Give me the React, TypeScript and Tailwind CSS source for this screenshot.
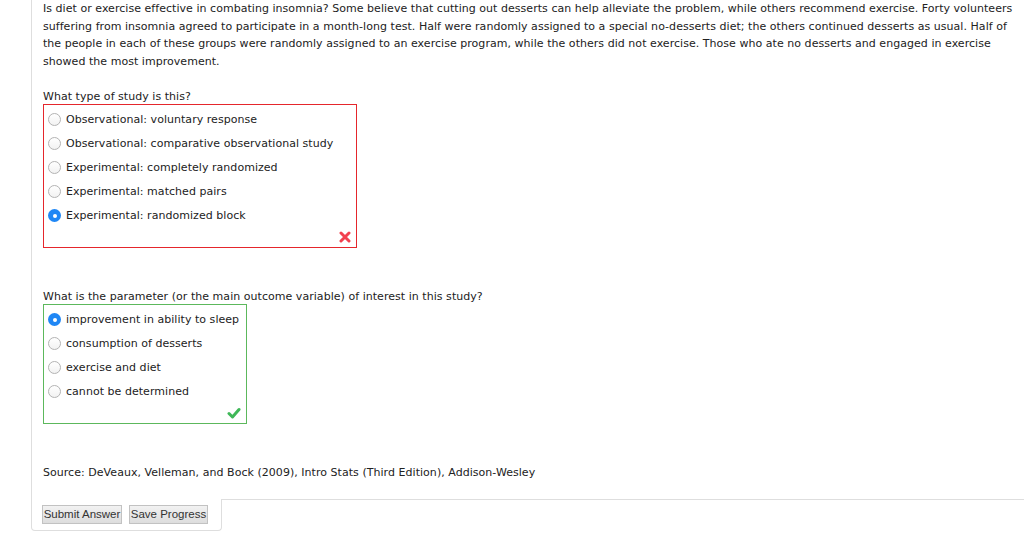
import type { ReactNode } from "react";

const font = { fontFamily: "'DejaVu Sans', Verdana, sans-serif" };
const btnFont = { fontFamily: "'Liberation Sans', Arial, sans-serif" };

function Radio({ checked }: { checked?: boolean }) {
  if (checked) {
    return (
      <span className="w-[13px] h-[13px] rounded-full bg-[#1f87f5] flex items-center justify-center shrink-0">
        <span className="w-[4px] h-[4px] rounded-full bg-white" />
      </span>
    );
  }
  return (
    <span className="w-[13px] h-[13px] rounded-full border border-[#b3b3b3] bg-gradient-to-b from-white to-[#f2f2f2] shrink-0" />
  );
}

function Option({ label, checked }: { label: string; checked?: boolean }) {
  return (
    <div className="flex items-center h-6 pl-[4px] gap-[5px]">
      <Radio checked={checked} />
      <span className="whitespace-nowrap">{label}</span>
    </div>
  );
}

function Cross() {
  return (
    <svg width="12" height="12" viewBox="0 0 12 12">
      <path d="M2 2 L10 10 M10 2 L2 10" stroke="#f2414f" strokeWidth="3" strokeLinecap="round" />
    </svg>
  );
}

function Check() {
  return (
    <svg width="14" height="12" viewBox="0 0 14 12">
      <path d="M2 6.5 L5.5 10 L12 2.5" stroke="#3fb858" strokeWidth="3" fill="none" strokeLinecap="round" strokeLinejoin="round" />
    </svg>
  );
}

function AnswerBox({ className, icon, children }: { className: string; icon: ReactNode; children: ReactNode }) {
  return (
    <div className={`border pt-[3px] ${className}`}>
      {children}
      <div className="h-[19px] flex items-center justify-end pr-[5px]">{icon}</div>
    </div>
  );
}

function Btn({ w, children }: { w: string; children: ReactNode }) {
  return (
    <button
      className={`h-[19px] ${w} p-0 whitespace-nowrap border border-[#c2c2c2] bg-gradient-to-b from-[#f2f2f2] to-[#dddddd] text-[#333] text-[11.5px] leading-[17px] tracking-normal`}
      style={btnFont}
    >
      {children}
    </button>
  );
}

export default function App() {
  return (
    <div className="h-[555px] bg-white text-[#222] text-[11px] tracking-[0.04px] overflow-hidden" style={font}>
      <div className="ml-[31px] border-l border-[#dedede] pl-[11px] pr-[6px] pb-[17px]">
        <p className="leading-[17.7px]">
          Is diet or exercise effective in combating insomnia? Some believe that cutting out desserts can help alleviate the problem, while others recommend exercise. Forty volunteers suffering from insomnia agreed to participate in a month-long test. Half were randomly assigned to a special no-desserts diet; the others continued desserts as usual. Half of the people in each of these groups were randomly assigned to an exercise program, while the others did not exercise. Those who ate no desserts and engaged in exercise showed the most improvement.
        </p>

        <div className="mt-[18px] leading-[15px]">What type of study is this?</div>
        <AnswerBox className="w-[314px] border-[#e5262c]" icon={<Cross />}>
          <Option label="Observational: voluntary response" />
          <Option label="Observational: comparative observational study" />
          <Option label="Experimental: completely randomized" />
          <Option label="Experimental: matched pairs" />
          <Option label="Experimental: randomized block" checked />
        </AnswerBox>

        <div className="mt-[41px] leading-[15px]">What is the parameter (or the main outcome variable) of interest in this study?</div>
        <AnswerBox className="w-[204px] border-[#5cb85c]" icon={<Check />}>
          <Option label="improvement in ability to sleep" checked />
          <Option label="consumption of desserts" />
          <Option label="exercise and diet" />
          <Option label="cannot be determined" />
        </AnswerBox>

        <div className="mt-[40px] leading-[18px]">
          Source: DeVeaux, Velleman, and Bock (2009), Intro Stats (Third Edition), Addison-Wesley
        </div>
      </div>

      <div className="flex ml-[31px]">
        <div className="w-[191px] h-[32px] border-l border-r border-b border-[#dedede] rounded-b-[4px] pl-[10px] pt-[6px] flex items-start gap-[7px]">
          <Btn w="w-[80px]">Submit Answer</Btn>
          <Btn w="w-[79px]">Save Progress</Btn>
        </div>
        <div className="flex-1 border-t border-[#dedede]" />
      </div>
    </div>
  );
}
